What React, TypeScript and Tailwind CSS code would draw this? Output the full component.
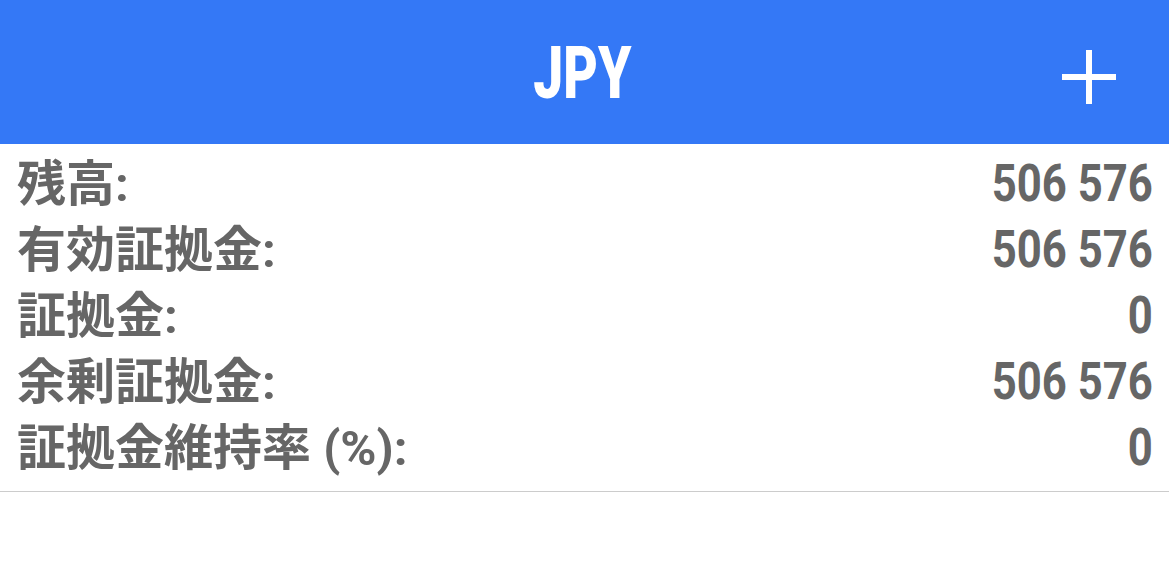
import React from "react";

const rows: [string, string][] = [
  ["残高:", "506 576"],
  ["有効証拠金:", "506 576"],
  ["証拠金:", "0"],
  ["余剰証拠金:", "506 576"],
  ["証拠金維持率 (%):", "0"],
];

export default function App() {
  return (
    <div className="w-[1169px] h-[563px] bg-white overflow-hidden">
      <div className="relative h-[144px] bg-[#3478f6] flex items-center justify-center">
        <span
          className="inline-block scale-x-[0.74] text-white font-black text-[72px] leading-none mt-[4px] -ml-[4px]"
          style={{ fontFamily: '"Roboto", "Liberation Sans", sans-serif' }}
        >
          JPY
        </span>
        <svg className="absolute left-[1062px] top-[50px]" width="54" height="54" viewBox="0 0 54 54">
          <rect x="24" y="0" width="6" height="54" fill="#fff" />
          <rect x="0" y="24" width="54" height="6" fill="#fff" />
        </svg>
      </div>
      <div
        className="pt-[7px] pb-[10px] px-[16px] border-b border-[#cccccc] text-[#666666] font-bold"
        style={{ fontFamily: '"Roboto", "Noto Sans CJK JP", sans-serif' }}
      >
        {rows.map(([l, v], i) => (
          <div key={i} className="h-[66px] flex items-center justify-between">
            <span className="text-[49px] leading-none ml-[1px]">{l}</span>
            <span className="inline-block scale-x-[0.84] origin-right text-[52px] leading-none">{v}</span>
          </div>
        ))}
      </div>
    </div>
  );
}
